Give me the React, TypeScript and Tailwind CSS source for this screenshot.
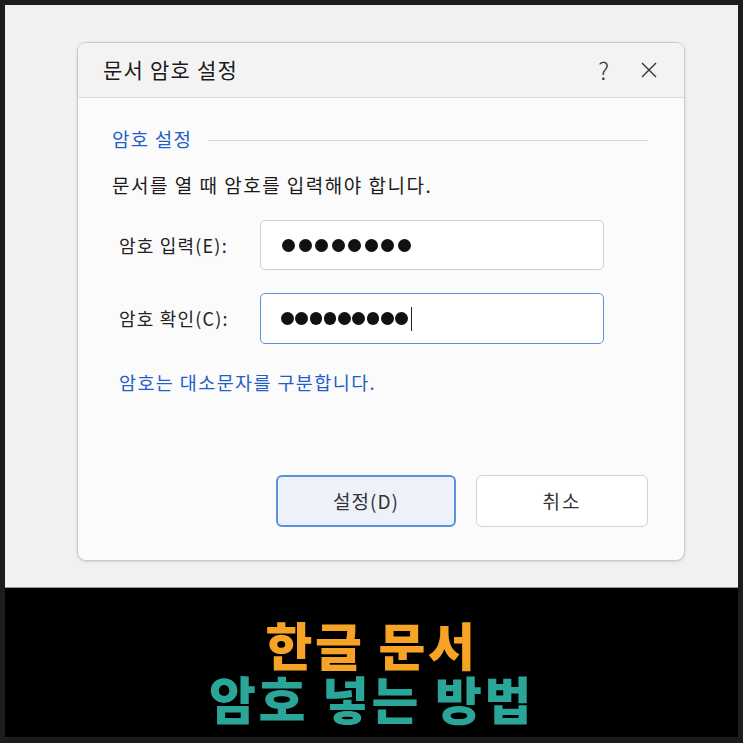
export default function App() {
    const font = { fontFamily: '"Noto Sans CJK KR", "Noto Sans", sans-serif' };

    const dots = (n: number, size: number, gap: number) => (
        <div className="flex items-center" style={{ gap }}>
            {Array.from({ length: n }).map((_, i) => (
                <span
                    key={i}
                    className="rounded-full bg-[#111]"
                    style={{ width: size, height: size }}
                />
            ))}
        </div>
    );

    return (
        <div
            className="w-[743px] h-[743px] bg-[#1c1c1c] pt-[5px] px-[5px] pb-[6px] flex flex-col"
            style={font}
        >
            {/* light area with the dialog */}
            <div className="h-[583px] shrink-0 bg-[#f1f1f1] border-b border-[#9a9a9a] pt-[37px] pl-[72px]">
                <div className="w-[608px] h-[519px] rounded-[9px] border border-[#c9c9c9] bg-[#fbfbfb] shadow-[0_1px_3px_rgba(0,0,0,0.12)] flex flex-col overflow-hidden">
                    {/* title bar */}
                    <div className="h-[55px] shrink-0 bg-[#f3f3f3] border-b border-[#dcdcdc] flex items-center pl-[25px] pr-[26px]">
                        <span className="text-[21px] text-[#1a1a1a] tracking-[1.2px]">
                            문서 암호 설정
                        </span>
                        <span className="ml-auto text-[24px] font-light text-[#333] mr-[31px]">
                            ?
                        </span>
                        <svg width="18" height="18" viewBox="0 0 18 18">
                            <path
                                d="M2 2 L16 16 M16 2 L2 16"
                                stroke="#333"
                                strokeWidth="1.4"
                                fill="none"
                            />
                        </svg>
                    </div>

                    {/* body */}
                    <div className="flex flex-col pl-[34px] pr-[36px] pt-[28px]">
                        <div className="flex items-center gap-[16px]">
                            <span className="text-[19px] text-[#1f5fc7] leading-[26px] tracking-[1.2px]">
                                암호 설정
                            </span>
                            <div className="flex-1 h-px bg-[#d9d9d9] mt-[2px]" />
                        </div>

                        <p className="mt-[20px] text-[19px] text-[#1a1a1a] leading-[26px] tracking-[1.5px]">
                            문서를 열 때 암호를 입력해야 합니다.
                        </p>

                        <div className="mt-[22px] flex items-center pl-[7px]">
                            <span className="w-[141px] text-[18px] text-[#222] tracking-[1.2px]">
                                암호 입력(E):
                            </span>
                            <div className="w-[344px] h-[50px] rounded-[5px] border border-[#cfcfcf] bg-white flex items-center pl-[21px]">
                                {dots(8, 13, 3.5)}
                            </div>
                        </div>

                        <div className="mt-[23px] flex items-center pl-[7px]">
                            <span className="w-[141px] text-[18px] text-[#222] tracking-[1.2px]">
                                암호 확인(C):
                            </span>
                            <div className="w-[344px] h-[51px] rounded-[5px] border-[1.5px] border-[#5b90dc] bg-white flex items-center pl-[20px]">
                                {dots(9, 12.5, 1.8)}
                                <span className="ml-[3px] w-[1.5px] h-[24px] bg-[#222]" />
                            </div>
                        </div>

                        <p className="mt-[25px] pl-[7px] text-[18.5px] text-[#1f5fc7] leading-[26px] tracking-[1.4px]">
                            암호는 대소문자를 구분합니다.
                        </p>

                        <div className="mt-[80px] flex justify-end gap-[20px]">
                            <button className="w-[180px] h-[52px] rounded-[6px] border-2 border-[#5b90dc] bg-[#edf2fa] text-[19px] text-[#333] tracking-[1px]">
                                설정(D)
                            </button>
                            <button className="w-[172px] h-[52px] rounded-[6px] border border-[#d3d3d3] bg-white text-[19px] text-[#333] tracking-[2px]">
                                취소
                            </button>
                        </div>
                    </div>
                </div>
            </div>

            {/* caption */}
            <div className="flex-1 bg-black flex flex-col items-center justify-center pt-[17px] font-black text-[51px] leading-[54px] tracking-[2.5px]">
                <span className="text-[#f7a325]">한글 문서</span>
                <span className="text-[#2aa698]">암호 넣는 방법</span>
            </div>
        </div>
    );
}
